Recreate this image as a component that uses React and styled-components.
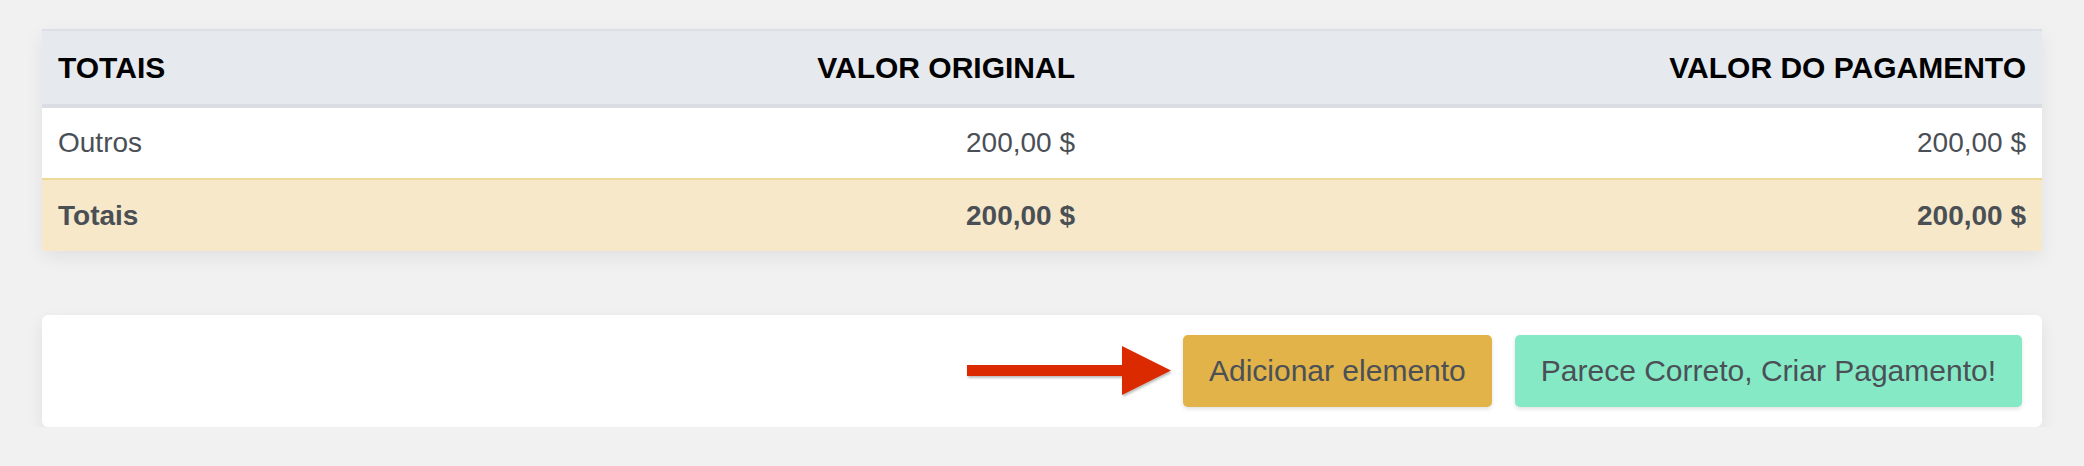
import React from 'react';
import styled, { createGlobalStyle } from 'styled-components';

const GlobalStyle = createGlobalStyle`
    body {
        margin: 0;
        background: #f1f1f1;
        font-family: "Liberation Sans", Arial, Helvetica, sans-serif;
    }
`

const Page = styled.div`
    padding: 29px 42px 0;
    display: flex;
    flex-direction: column;
    gap: 64px;
`

const Table = styled.div`
    background: white;
    box-shadow: 0 6px 18px rgba(0,0,0,.07);
`

const rowStyles = {
    head: `
        height: 79px;
        background: #e6e9ee;
        border-top: 2px solid #dcdfe4;
        border-bottom: 4px solid #dadde2;
        color: #000;
        font-weight: bold;
        font-size: 30px;
    `,
    body: `
        height: 70px;
        background: #fff;
        color: #4a4f56;
        font-size: 28px;
    `,
    total: `
        height: 73px;
        background: #f6e8c9;
        border-top: 2px solid #f0d898;
        color: #4a4f56;
        font-weight: bold;
        font-size: 28px;
    `,
}

const Row = styled.div`
    box-sizing: border-box;
    display: grid;
    grid-template-columns: 1fr 527px 951px;
    align-items: center;
    ${p => rowStyles[p.$kind]}
`

const Cell = styled.div`
    padding: 0 16px;
    text-align: ${p => p.$right ? 'right' : 'left'};
    white-space: nowrap;
`

const ActionBar = styled.div`
    background: white;
    border-radius: 6px;
    padding: 20px;
    display: flex;
    justify-content: flex-end;
    align-items: center;
    box-shadow: 0 6px 18px rgba(0,0,0,.07);
`

const Arrow = styled.svg`
    margin-right: 11px;
    filter: drop-shadow(1px 2px 1px rgba(0,0,0,.25));
`

const Button = styled.button`
    height: 72px;
    padding: 0 26px;
    margin-left: ${p => p.$gap || 0}px;
    border: none;
    border-radius: 5px;
    background: ${p => p.$color};
    color: #4b5057;
    font-family: inherit;
    font-size: 30px;
    box-shadow: 0 2px 4px rgba(0,0,0,.12);
    cursor: pointer;
`

const rows = [
    { label: 'Outros', original: '200,00 $', payment: '200,00 $' },
]

const App = () => {
    return (
        <>
            <GlobalStyle />
            <Page>
                <Table>
                    <Row $kind='head'>
                        <Cell>TOTAIS</Cell>
                        <Cell $right>VALOR ORIGINAL</Cell>
                        <Cell $right>VALOR DO PAGAMENTO</Cell>
                    </Row>
                    {rows.map(r => (
                        <Row $kind='body' key={r.label}>
                            <Cell>{r.label}</Cell>
                            <Cell $right>{r.original}</Cell>
                            <Cell $right>{r.payment}</Cell>
                        </Row>
                    ))}
                    <Row $kind='total'>
                        <Cell>Totais</Cell>
                        <Cell $right>200,00 $</Cell>
                        <Cell $right>200,00 $</Cell>
                    </Row>
                </Table>
                <ActionBar>
                    <Arrow width='205' height='50' viewBox='0 0 205 50'>
                        <rect x='0' y='19' width='156' height='11' fill='#dc2a00' />
                        <polygon points='155,0 204,24.5 155,49' fill='#dc2a00' />
                    </Arrow>
                    <Button $color='#e1b349'>Adicionar elemento</Button>
                    <Button $color='#86e9c5' $gap={23}>Parece Correto, Criar Pagamento!</Button>
                </ActionBar>
            </Page>
        </>
    )
}

export default App
